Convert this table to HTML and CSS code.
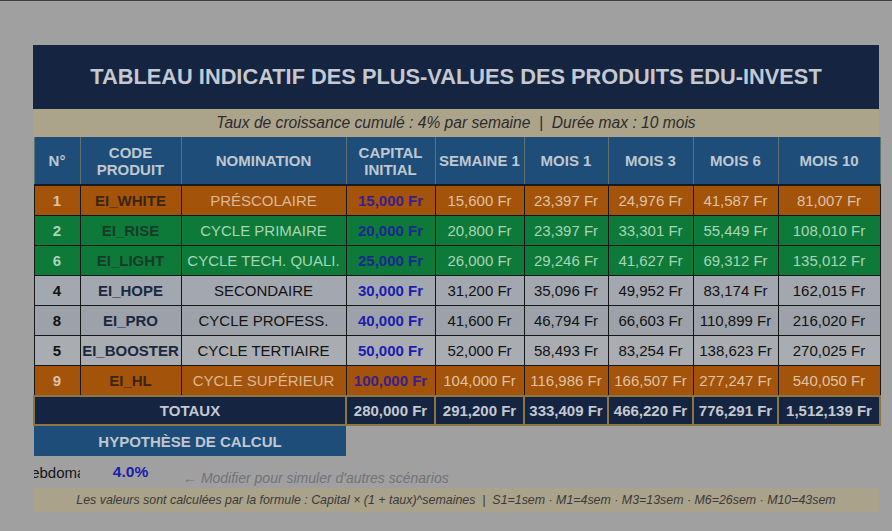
FILE: index.html
```html
<!DOCTYPE html>
<html lang="fr">
<head>
<meta charset="utf-8">
<title>Tableau indicatif EDU-INVEST</title>
<link rel="stylesheet" href="styles.css">
</head>
<body>
<div class="topline"></div>
<main class="sheet">
  <div class="title">TABLEAU INDICATIF DES PLUS-VALUES DES PRODUITS EDU-INVEST</div>
  <div class="subtitle">Taux de croissance cumulé : 4% par semaine  |  Durée max : 10 mois</div>
  <table class="grid">
    <colgroup>
      <col class="c-no"><col class="c-code"><col class="c-nom"><col class="c-cap">
      <col class="c-s1"><col class="c-m1"><col class="c-m3"><col class="c-m6"><col class="c-m10">
    </colgroup>
    <thead>
      <tr class="head">
        <th>N°</th><th>CODE<br>PRODUIT</th><th>NOMINATION</th><th>CAPITAL<br>INITIAL</th>
        <th>SEMAINE 1</th><th>MOIS 1</th><th>MOIS 3</th><th>MOIS 6</th><th>MOIS 10</th>
      </tr>
    </thead>
    <tbody>
      <tr class="row orange">
        <td class="no">1</td><td class="code">EI_WHITE</td><td class="nom">PRÉSCOLAIRE</td><td class="cap">15,000 Fr</td>
        <td class="val">15,600 Fr</td><td class="val">23,397 Fr</td><td class="val">24,976 Fr</td><td class="val">41,587 Fr</td><td class="val">81,007 Fr</td>
      </tr>
      <tr class="row green">
        <td class="no">2</td><td class="code">EI_RISE</td><td class="nom">CYCLE PRIMAIRE</td><td class="cap">20,000 Fr</td>
        <td class="val">20,800 Fr</td><td class="val">23,397 Fr</td><td class="val">33,301 Fr</td><td class="val">55,449 Fr</td><td class="val">108,010 Fr</td>
      </tr>
      <tr class="row green">
        <td class="no">6</td><td class="code">EI_LIGHT</td><td class="nom">CYCLE TECH. QUALI.</td><td class="cap">25,000 Fr</td>
        <td class="val">26,000 Fr</td><td class="val">29,246 Fr</td><td class="val">41,627 Fr</td><td class="val">69,312 Fr</td><td class="val">135,012 Fr</td>
      </tr>
      <tr class="row grey-a">
        <td class="no">4</td><td class="code">EI_HOPE</td><td class="nom">SECONDAIRE</td><td class="cap">30,000 Fr</td>
        <td class="val">31,200 Fr</td><td class="val">35,096 Fr</td><td class="val">49,952 Fr</td><td class="val">83,174 Fr</td><td class="val">162,015 Fr</td>
      </tr>
      <tr class="row grey-b">
        <td class="no">8</td><td class="code">EI_PRO</td><td class="nom">CYCLE PROFESS.</td><td class="cap">40,000 Fr</td>
        <td class="val">41,600 Fr</td><td class="val">46,794 Fr</td><td class="val">66,603 Fr</td><td class="val">110,899 Fr</td><td class="val">216,020 Fr</td>
      </tr>
      <tr class="row grey-c">
        <td class="no">5</td><td class="code">EI_BOOSTER</td><td class="nom">CYCLE TERTIAIRE</td><td class="cap">50,000 Fr</td>
        <td class="val">52,000 Fr</td><td class="val">58,493 Fr</td><td class="val">83,254 Fr</td><td class="val">138,623 Fr</td><td class="val">270,025 Fr</td>
      </tr>
      <tr class="row orange">
        <td class="no">9</td><td class="code">EI_HL</td><td class="nom">CYCLE SUPÉRIEUR</td><td class="cap">100,000 Fr</td>
        <td class="val">104,000 Fr</td><td class="val">116,986 Fr</td><td class="val">166,507 Fr</td><td class="val">277,247 Fr</td><td class="val">540,050 Fr</td>
      </tr>
      <tr class="total">
        <td colspan="3">TOTAUX</td><td>280,000 Fr</td>
        <td>291,200 Fr</td><td>333,409 Fr</td><td>466,220 Fr</td><td>776,291 Fr</td><td>1,512,139 Fr</td>
      </tr>
      <tr class="hyp">
        <td colspan="3" class="hyp-title">HYPOTHÈSE DE CALCUL</td><td colspan="6"></td>
      </tr>
      <tr class="input">
        <td class="lbl"><div class="clip">Taux hebdomadaire :</div></td>
        <td class="rate">4.0%</td>
        <td class="note" colspan="7">← Modifier pour simuler d'autres scénarios</td>
      </tr>
    </tbody>
  </table>
  <div class="footer">Les valeurs sont calculées par la formule : Capital × (1 + taux)^semaines  |  S1=1sem · M1=4sem · M3=13sem · M6=26sem · M10=43sem</div>
</main>
</body>
</html>
```

FILE: styles.css
```css
html, body {
  margin: 0;
  padding: 0;
}
body {
  background: #a0a0a0;
  font-family: "Liberation Sans", Arial, sans-serif;
  width: 892px;
  height: 531px;
  overflow: hidden;
}
.topline {
  height: 1px;
  background: #3e3e3e;
}
.sheet {
  width: 846px;
  margin: 44px 0 0 33px;
}
.title {
  height: 64px;
  background: #152440;
  color: #c4c8d0;
  font-weight: bold;
  font-size: 21.8px;
  display: flex;
  align-items: center;
  justify-content: center;
}
.subtitle {
  height: 28px;
  background: #aca38b;
  color: #2c2c2c;
  font-style: italic;
  font-size: 15.6px;
  white-space: pre;
  display: flex;
  align-items: center;
  justify-content: center;
}
.grid {
  width: 846px;
  table-layout: fixed;
  border-collapse: collapse;
  border-spacing: 0;
}
.c-no { width: 46px; }
.c-code { width: 101px; }
.c-nom { width: 165px; }
.c-cap { width: 89px; }
.c-s1 { width: 89px; }
.c-m1 { width: 84px; }
.c-m3 { width: 85px; }
.c-m6 { width: 85px; }
.c-m10 { width: 102px; }

.grid th, .grid td {
  padding: 0 1px;
  text-align: center;
  white-space: nowrap;
  font-size: 15px;
}
.head th {
  height: 47px;
  background: #1f4d79;
  color: #bfc7d0;
  font-weight: bold;
  font-size: 15px;
  line-height: 17px;
  border-left: 1px solid #5f7272;
  border-right: 1px solid #5f7272;
  border-bottom: 2px solid #1a1a1a;
}
.row td {
  height: 29px;
  border: 1px solid #161616;
}
.row .no, .row .code, .row .cap { font-weight: bold; }

.orange td { background: #a4530b; }
.orange .no { color: #dcc2a6; }
.orange .code { color: #3a2514; }
.orange .nom { color: #dcb894; }
.orange .cap { color: #38208e; }
.orange .val { color: #dfc2a4; }

.green td { background: #0e7a3a; }
.green .no { color: #acd2b8; }
.green .code { color: #163c28; }
.green .nom { color: #a6d6b6; }
.green .cap { color: #1a2890; }
.green .val { color: #a8d4b8; }

.grey-a td { background: #a3a8b0; }
.grey-b td { background: #9da2aa; }
.grey-c td { background: #a9acb1; }
.grey-a td, .grey-b td, .grey-c td { color: #121212; }
.grey-a .code, .grey-b .code, .grey-c .code { color: #1b2840; }
.grey-a .cap, .grey-b .cap, .grey-c .cap { color: #1c1cae; }

.total td {
  height: 27px;
  background: #152440;
  color: #c4c8d0;
  font-weight: bold;
  border: 2px solid #8a7644;
}
.hyp td {
  height: 30px;
  padding: 0;
}
.hyp .hyp-title {
  background: #1f4d79;
  color: #bfc7d0;
  font-weight: bold;
}
.input td {
  height: 30px;
  padding: 0;
}
.lbl .clip {
  display: flex;
  justify-content: center;
  overflow: hidden;
  white-space: nowrap;
  font-size: 15px;
  color: #141414;
}
.rate {
  color: #1c1cae;
  font-weight: bold;
}
.grid .rate {
  font-size: 15.5px;
}
.grid .note {
  text-align: left;
  padding-left: 2px;
  vertical-align: bottom;
  padding-bottom: 2px;
  font-size: 14px;
  font-style: italic;
  color: #727278;
}
.footer {
  height: 24px;
  background: #aaa28b;
  color: #3a3a3a;
  font-style: italic;
  font-size: 12.4px;
  white-space: pre;
  display: flex;
  align-items: center;
  justify-content: center;
}
```
